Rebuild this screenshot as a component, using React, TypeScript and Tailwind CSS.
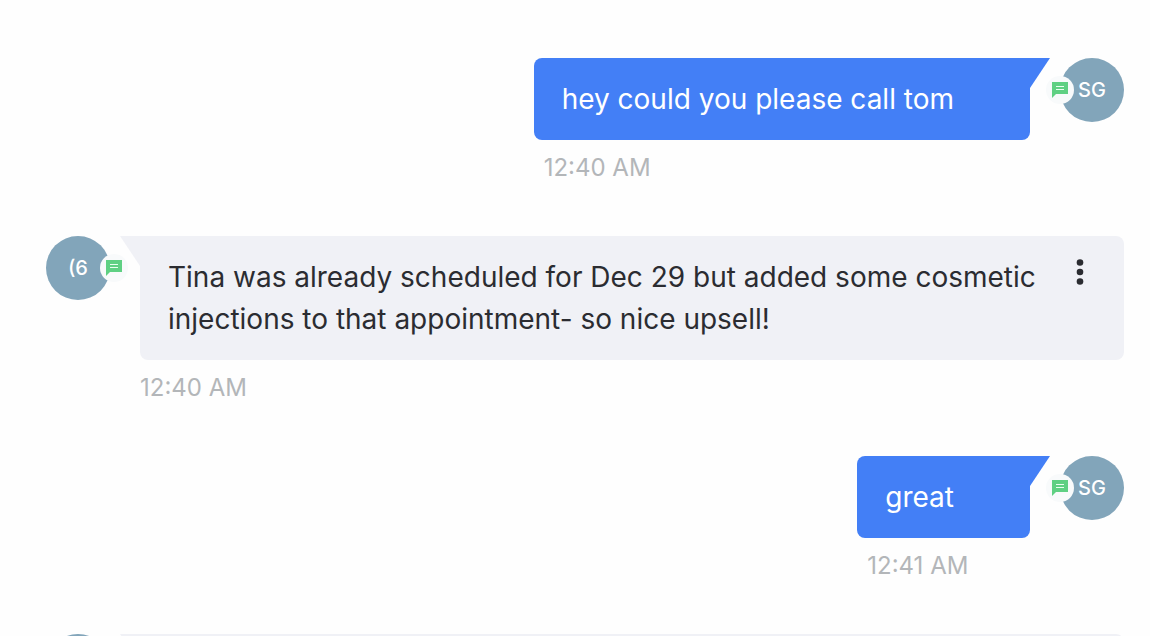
type Message = {
  id: number;
  initials: string;
  text: string;
  time: string;
  outgoing: boolean;
};

const messages: Message[] = [
  { id: 1, initials: "SG", text: "hey could you please call tom", time: "12:40 AM", outgoing: true },
  {
    id: 2,
    initials: "(6",
    text: "Tina was already scheduled for Dec 29 but added some cosmetic injections to that appointment- so nice upsell!",
    time: "12:40 AM",
    outgoing: false,
  },
  { id: 3, initials: "SG", text: "great", time: "12:41 AM", outgoing: true },
  { id: 4, initials: "", text: "", time: "", outgoing: false },
];

function Avatar({ initials, outgoing }: { initials: string; outgoing: boolean }) {
  return (
    <div className="relative flex size-16 shrink-0 items-center justify-center rounded-full bg-[#82a5ba] text-xl font-medium text-white">
      {initials}
      <span
        className={`absolute top-[18px] flex size-7 items-center justify-center rounded-full bg-[#f8fafb] ${
          outgoing ? "-left-3.5" : "-right-[18px]"
        }`}
      >
        <svg viewBox="0 0 16 16" className="size-4" aria-hidden="true">
          <path d="M0 0h16v12H4l-4 4z" fill="#5fd083" />
          <path d="M4 4.5h8M4 7.5h8" stroke="#e9fff0" strokeWidth="1" />
        </svg>
      </span>
    </div>
  );
}

function Tail({ outgoing }: { outgoing: boolean }) {
  return (
    <svg
      viewBox="0 0 20 30"
      className={`absolute top-0 h-[30px] w-5 ${
        outgoing ? "left-full text-[#437ff6]" : "right-full text-[#f0f1f6]"
      }`}
      aria-hidden="true"
    >
      <path d={outgoing ? "M0 0h20L0 30z" : "M20 0H0l20 30z"} fill="currentColor" />
    </svg>
  );
}

function MessageRow({ message }: { message: Message }) {
  const { initials, text, time, outgoing } = message;

  return (
    <li className={`flex items-start gap-[30px] ${outgoing ? "flex-row-reverse" : ""}`}>
      <Avatar initials={initials} outgoing={outgoing} />
      <div className={outgoing ? "" : "min-w-0 flex-1"}>
        <div
          className={`relative flex justify-between py-5 pl-7 ${
            outgoing
              ? "rounded-lg rounded-tr-none bg-[#437ff6] pr-[76px] text-white"
              : "rounded-lg rounded-tl-none bg-[#f0f1f6] pr-6 text-[#2b2c31]"
          }`}
        >
          <Tail outgoing={outgoing} />
          <p className="min-h-[42px] text-[28px] leading-[42px]">{text}</p>
          {!outgoing && (
            <button type="button" aria-label="Message options" className="flex h-8 w-10 shrink-0 justify-center">
              <svg viewBox="0 0 8 32" className="h-8 w-2" fill="currentColor" aria-hidden="true">
                <circle cx="4" cy="6.5" r="3.3" />
                <circle cx="4" cy="16" r="3.3" />
                <circle cx="4" cy="25.5" r="3.3" />
              </svg>
            </button>
          )}
        </div>
        <time className={`mt-3 block h-8 text-2xl leading-8 text-[#b3b6b9] ${outgoing ? "ml-2.5" : ""}`}>
          {time}
        </time>
      </div>
    </li>
  );
}

export default function App() {
  return (
    <main className="h-screen overflow-hidden bg-[#fefefe] pt-[58px] pr-[26px] pl-[46px] font-['Inter',sans-serif]">
      <ul className="flex flex-col gap-[52px]">
        {messages.map((message) => (
          <MessageRow key={message.id} message={message} />
        ))}
      </ul>
    </main>
  );
}
